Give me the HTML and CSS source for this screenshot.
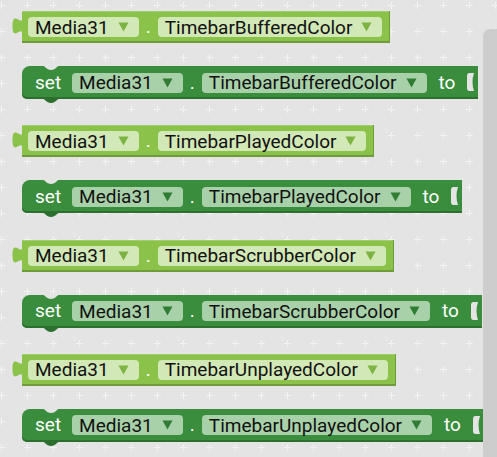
FILE: index.html
```html
<!DOCTYPE html>
<html>
<head>
<meta charset="utf-8">
<link rel="stylesheet" href="styles.css">
</head>
<body>
<div class="workspace">
  <svg class="grid" width="497" height="457" aria-hidden="true">
    <defs>
      <pattern id="plus" x="14" y="-8" width="26" height="26" patternUnits="userSpaceOnUse">
        <rect x="10" y="13" width="7" height="1" fill="#f3f3f3"/>
        <rect x="13" y="10" width="1" height="7" fill="#f3f3f3"/>
      </pattern>
    </defs>
    <rect width="497" height="457" fill="url(#plus)"/>
  </svg>

  <div class="blocks">
    <div class="getter">
      <svg class="tab" width="10" height="32" viewBox="0 0 10 32"><path d="M10.5,6 c0,11 -10,-8 -10,9 s10,-2 10,9 Z"/></svg>
      <div class="gbody">
        <span class="field">Media31<svg class="arrow" width="11" height="10" viewBox="0 0 11 10"><path d="M0.5,0.5 H10.5 L5.5,9.5 Z"/></svg></span>
        <span class="dot">.</span>
        <span class="field">TimebarBufferedColor<svg class="arrow" width="11" height="10" viewBox="0 0 11 10"><path d="M0.5,0.5 H10.5 L5.5,9.5 Z"/></svg></span>
      </div>
    </div>
    <div class="setter">
      <svg class="notch" width="22" height="6" viewBox="0 0 22 6"><path d="M0,0 C5,0 6,5 11,5 C16,5 17,0 22,0 Z"/></svg>
      <svg class="bump" width="22" height="6" viewBox="0 0 22 6"><path d="M0,0 C5,0 6,5 11,5 C16,5 17,0 22,0 Z"/></svg>
      <span class="label set">set</span>
      <span class="field">Media31<svg class="arrow" width="11" height="10" viewBox="0 0 11 10"><path d="M0.5,0.5 H10.5 L5.5,9.5 Z"/></svg></span>
      <span class="dot">.</span>
      <span class="field">TimebarBufferedColor<svg class="arrow" width="11" height="10" viewBox="0 0 11 10"><path d="M0.5,0.5 H10.5 L5.5,9.5 Z"/></svg></span>
      <span class="label to">to</span>
      <svg class="slot" width="12" height="33" viewBox="0 0 12 33"><path d="M8,7 H3.5 Q1,7 1,10 V22 Q1,25 3.5,25 H8 Q5,16 8,7 Z"/></svg>
    </div>

    <div class="getter">
      <svg class="tab" width="10" height="32" viewBox="0 0 10 32"><path d="M10.5,6 c0,11 -10,-8 -10,9 s10,-2 10,9 Z"/></svg>
      <div class="gbody">
        <span class="field">Media31<svg class="arrow" width="11" height="10" viewBox="0 0 11 10"><path d="M0.5,0.5 H10.5 L5.5,9.5 Z"/></svg></span>
        <span class="dot">.</span>
        <span class="field">TimebarPlayedColor<svg class="arrow" width="11" height="10" viewBox="0 0 11 10"><path d="M0.5,0.5 H10.5 L5.5,9.5 Z"/></svg></span>
      </div>
    </div>
    <div class="setter">
      <svg class="notch" width="22" height="6" viewBox="0 0 22 6"><path d="M0,0 C5,0 6,5 11,5 C16,5 17,0 22,0 Z"/></svg>
      <svg class="bump" width="22" height="6" viewBox="0 0 22 6"><path d="M0,0 C5,0 6,5 11,5 C16,5 17,0 22,0 Z"/></svg>
      <span class="label set">set</span>
      <span class="field">Media31<svg class="arrow" width="11" height="10" viewBox="0 0 11 10"><path d="M0.5,0.5 H10.5 L5.5,9.5 Z"/></svg></span>
      <span class="dot">.</span>
      <span class="field">TimebarPlayedColor<svg class="arrow" width="11" height="10" viewBox="0 0 11 10"><path d="M0.5,0.5 H10.5 L5.5,9.5 Z"/></svg></span>
      <span class="label to">to</span>
      <svg class="slot" width="12" height="33" viewBox="0 0 12 33"><path d="M8,7 H3.5 Q1,7 1,10 V22 Q1,25 3.5,25 H8 Q5,16 8,7 Z"/></svg>
    </div>

    <div class="getter">
      <svg class="tab" width="10" height="32" viewBox="0 0 10 32"><path d="M10.5,6 c0,11 -10,-8 -10,9 s10,-2 10,9 Z"/></svg>
      <div class="gbody">
        <span class="field">Media31<svg class="arrow" width="11" height="10" viewBox="0 0 11 10"><path d="M0.5,0.5 H10.5 L5.5,9.5 Z"/></svg></span>
        <span class="dot">.</span>
        <span class="field">TimebarScrubberColor<svg class="arrow" width="11" height="10" viewBox="0 0 11 10"><path d="M0.5,0.5 H10.5 L5.5,9.5 Z"/></svg></span>
      </div>
    </div>
    <div class="setter">
      <svg class="notch" width="22" height="6" viewBox="0 0 22 6"><path d="M0,0 C5,0 6,5 11,5 C16,5 17,0 22,0 Z"/></svg>
      <svg class="bump" width="22" height="6" viewBox="0 0 22 6"><path d="M0,0 C5,0 6,5 11,5 C16,5 17,0 22,0 Z"/></svg>
      <span class="label set">set</span>
      <span class="field">Media31<svg class="arrow" width="11" height="10" viewBox="0 0 11 10"><path d="M0.5,0.5 H10.5 L5.5,9.5 Z"/></svg></span>
      <span class="dot">.</span>
      <span class="field">TimebarScrubberColor<svg class="arrow" width="11" height="10" viewBox="0 0 11 10"><path d="M0.5,0.5 H10.5 L5.5,9.5 Z"/></svg></span>
      <span class="label to">to</span>
      <svg class="slot" width="12" height="33" viewBox="0 0 12 33"><path d="M8,7 H3.5 Q1,7 1,10 V22 Q1,25 3.5,25 H8 Q5,16 8,7 Z"/></svg>
    </div>

    <div class="getter">
      <svg class="tab" width="10" height="32" viewBox="0 0 10 32"><path d="M10.5,6 c0,11 -10,-8 -10,9 s10,-2 10,9 Z"/></svg>
      <div class="gbody">
        <span class="field">Media31<svg class="arrow" width="11" height="10" viewBox="0 0 11 10"><path d="M0.5,0.5 H10.5 L5.5,9.5 Z"/></svg></span>
        <span class="dot">.</span>
        <span class="field">TimebarUnplayedColor<svg class="arrow" width="11" height="10" viewBox="0 0 11 10"><path d="M0.5,0.5 H10.5 L5.5,9.5 Z"/></svg></span>
      </div>
    </div>
    <div class="setter">
      <svg class="notch" width="22" height="6" viewBox="0 0 22 6"><path d="M0,0 C5,0 6,5 11,5 C16,5 17,0 22,0 Z"/></svg>
      <svg class="bump" width="22" height="6" viewBox="0 0 22 6"><path d="M0,0 C5,0 6,5 11,5 C16,5 17,0 22,0 Z"/></svg>
      <span class="label set">set</span>
      <span class="field">Media31<svg class="arrow" width="11" height="10" viewBox="0 0 11 10"><path d="M0.5,0.5 H10.5 L5.5,9.5 Z"/></svg></span>
      <span class="dot">.</span>
      <span class="field">TimebarUnplayedColor<svg class="arrow" width="11" height="10" viewBox="0 0 11 10"><path d="M0.5,0.5 H10.5 L5.5,9.5 Z"/></svg></span>
      <span class="label to">to</span>
      <svg class="slot" width="12" height="33" viewBox="0 0 12 33"><path d="M8,7 H3.5 Q1,7 1,10 V22 Q1,25 3.5,25 H8 Q5,16 8,7 Z"/></svg>
    </div>
  </div>

  <div class="scrollbar"></div>
</div>
</body>
</html>
```

FILE: styles.css
```css
html, body {
  margin: 0;
  padding: 0;
}
body {
  width: 497px;
  height: 457px;
  overflow: hidden;
  font-family: Roboto, "Liberation Sans", sans-serif;
}
.workspace {
  position: relative;
  width: 497px;
  height: 457px;
  background: #e4e4e4;
  display: grid;
  overflow: hidden;
}
.grid {
  grid-area: 1 / 1;
  display: block;
}
.blocks {
  grid-area: 1 / 1;
  display: flex;
  flex-direction: column;
  align-items: flex-start;
  padding: 11px 0 0 12px;
}
.getter {
  display: flex;
  align-items: stretch;
  height: 32px;
  margin-bottom: 23px;
}
.tab {
  display: block;
  fill: #8bc34a;
}
.gbody {
  display: flex;
  align-items: center;
  gap: 7px;
  padding: 0 8px 0 6px;
  background: #8bc34a;
  box-shadow: inset 0 -2px 0 #6f9c3b, inset -1px 0 0 #6f9c3b, inset 0 1px 0 #a2cf6e;
}
.field {
  display: flex;
  align-items: center;
  gap: 9px;
  height: 20px;
  padding: 0 10px 0 7px;
  border-radius: 4px;
  font-size: 19px;
  color: #111;
  white-space: nowrap;
}
.gbody .field {
  background: #d2e8b6;
}
.gbody .arrow {
  fill: #7cb342;
}
.dot {
  color: #fff;
  font-size: 19px;
  line-height: 20px;
}
.setter {
  position: relative;
  display: flex;
  align-items: center;
  height: 33px;
  margin-left: 10px;
  margin-bottom: 26.33px;
  padding-left: 13px;
  background: #398d3d;
  border-radius: 8px 0 0 5px;
  box-shadow: inset 0 -2px 0 #2c6f2f;
}
.setter .dot {
  margin: 0 7px;
}
.setter .field {
  background: #a9d1a9;
}
.setter .arrow {
  fill: #2e7d32;
}
.label {
  color: #fff;
  font-size: 19px;
  line-height: 20px;
}
.label.set {
  margin-right: 11px;
}
.label.to {
  margin-left: 12px;
}
.notch {
  position: absolute;
  left: 18px;
  top: -1px;
  fill: #e4e4e4;
}
.bump {
  position: absolute;
  left: 18px;
  bottom: -5px;
  fill: #2c6f2f;
}
.slot {
  display: block;
  margin-left: 11px;
  fill: #e4e4e4;
}
.scrollbar {
  position: absolute;
  left: 483px;
  top: 29px;
  width: 14px;
  height: 440px;
  background: #cdcdcd;
  border-radius: 7px 0 0 0;
}
```
